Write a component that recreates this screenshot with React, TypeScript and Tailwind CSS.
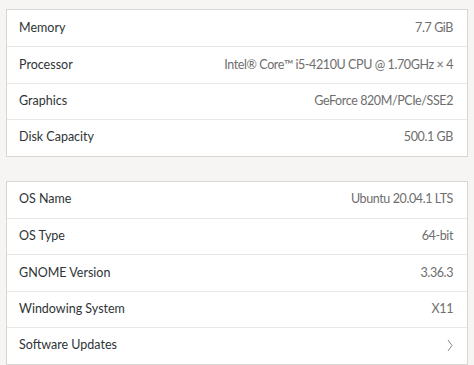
const hardware: [string, string][] = [
  ["Memory", "7.7 GiB"],
  ["Processor", "Intel® Core™ i5-4210U CPU @ 1.70GHz × 4"],
  ["Graphics", "GeForce 820M/PCIe/SSE2"],
  ["Disk Capacity", "500.1 GB"],
];

const system: [string, string][] = [
  ["OS Name", "Ubuntu 20.04.1 LTS"],
  ["OS Type", "64-bit"],
  ["GNOME Version", "3.36.3"],
  ["Windowing System", "X11"],
];

function Row({ label, value }: { label: string; value: React.ReactNode }) {
  return (
    <div className="flex h-[36.4px] items-center justify-between border-t border-[#e8e8e7] pl-3 pr-[14px] first:border-t-0">
      <span className="text-[12.5px] text-[#2e3436]">{label}</span>
      <span className="text-[12.5px] tracking-[-0.4px] text-[#6e6e6e]">{value}</span>
    </div>
  );
}

export default function App() {
  return (
    <div
      className="flex h-[365px] w-[474px] flex-col gap-[24px] bg-[#f6f5f4] px-[6px] pt-[9px]"
      style={{ fontFamily: 'Lato, "Noto Sans", sans-serif' }}
    >
      <div className="w-[462px] border border-[#d8d6d3] bg-white">
        {hardware.map(([l, v]) => (
          <Row key={l} label={l} value={v} />
        ))}
      </div>
      <div className="w-[462px] border border-[#d8d6d3] bg-white">
        {system.map(([l, v]) => (
          <Row key={l} label={l} value={v} />
        ))}
        <Row
          label="Software Updates"
          value={
            <svg width="6" height="13" viewBox="0 0 6 13" className="block">
              <path d="M1 1 L5 6.5 L1 12" fill="none" stroke="#8a8a8a" strokeWidth="1" />
            </svg>
          }
        />
      </div>
    </div>
  );
}
